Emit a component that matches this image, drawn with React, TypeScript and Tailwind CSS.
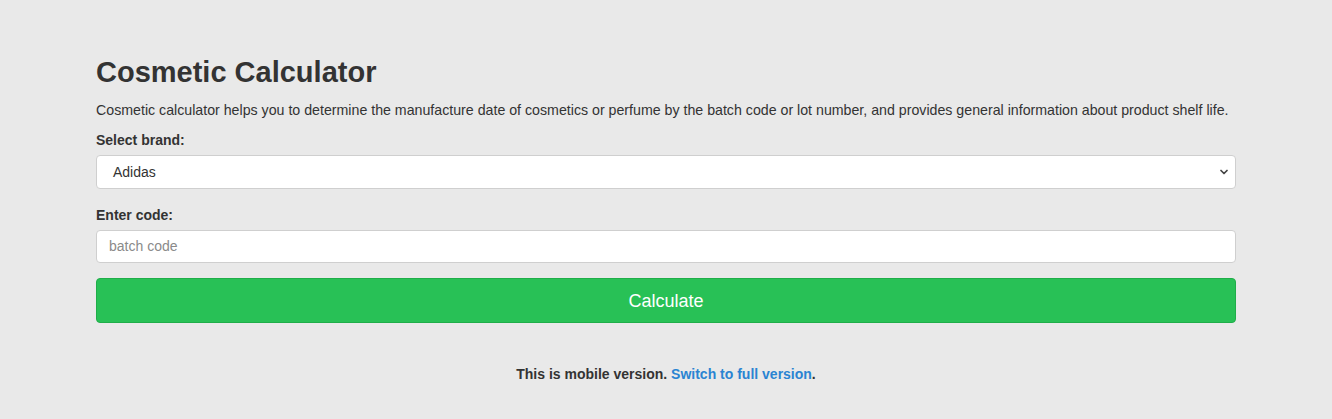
import { ChevronDown } from "lucide-react";

export default function App() {
  return (
    <div
      className="min-h-[419px] bg-[#e9e9e9] text-[#333333]"
      style={{ fontFamily: '"Liberation Sans", Arial, Helvetica, sans-serif' }}
    >
      <div className="mx-auto w-[1140px] pt-[55px] pb-[30px]">
        <h1 className="text-[29px] font-bold leading-[34px] mb-[11px]">Cosmetic Calculator</h1>
        <p className="text-[14.2px] leading-[20px] mb-[11px]">
          Cosmetic calculator helps you to determine the manufacture date of cosmetics or perfume by the batch code or
          lot number, and provides general information about product shelf life.
        </p>

        <label className="block text-[14px] font-bold leading-[18px] mb-[6px]">Select brand:</label>
        <div className="relative mb-[17px]">
          <div className="h-[34px] rounded-[4px] border border-[#cfcfcf] bg-white flex items-center pl-[16px] text-[14px]">
            Adidas
          </div>
          <ChevronDown
            className="absolute right-[6px] top-[11px] h-[12px] w-[12px] text-[#444]"
            strokeWidth={3.5}
          />
        </div>

        <label className="block text-[14px] font-bold leading-[18px] mb-[6px]">Enter code:</label>
        <div className="h-[33px] rounded-[4px] border border-[#cfcfcf] bg-white flex items-center pl-[12px] text-[14px] text-[#8a8a8a] mb-[15px]">
          batch code
        </div>

        <button className="w-full h-[45px] rounded-[4px] bg-[#28c156] border border-[#1fae49] text-white text-[18px] pt-[2px]">
          Calculate
        </button>

        <p className="mt-[42px] text-center text-[14px] font-bold leading-[18px]">
          This is mobile version. <span className="text-[#2a84d2]">Switch to full version</span>.
        </p>
      </div>
    </div>
  );
}
